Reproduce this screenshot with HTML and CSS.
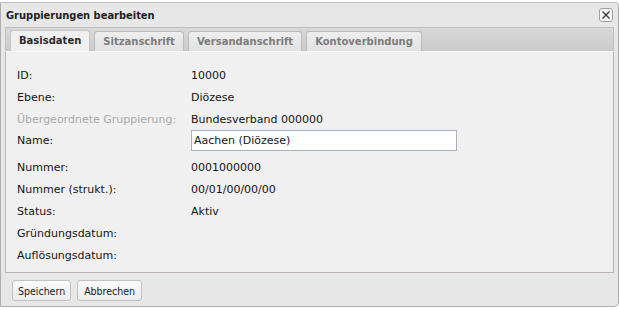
FILE: index.html
```html
<!DOCTYPE html>
<html lang="de">
<head>
<meta charset="utf-8">
<title>Gruppierungen bearbeiten</title>
<link rel="stylesheet" href="styles.css">
</head>
<body>
<div class="window">
  <div class="titlebar">
    <span class="title">Gruppierungen bearbeiten</span>
    <span class="close" aria-label="Schließen">
      <svg width="10" height="10" viewBox="0 0 10 10"><path d="M1.5 1.5L8.5 8.5M8.5 1.5L1.5 8.5" stroke="#3a3a3a" stroke-width="1.3" fill="none"/></svg>
    </span>
  </div>
  <div class="tabstrip">
    <span class="tab active">Basisdaten</span>
    <span class="tab">Sitzanschrift</span>
    <span class="tab">Versandanschrift</span>
    <span class="tab">Kontoverbindung</span>
  </div>
  <div class="panel">
    <div class="form">
      <div class="label">ID:</div><div class="value">10000</div>
      <div class="label">Ebene:</div><div class="value">Diözese</div>
      <div class="label disabled">Übergeordnete Gruppierung:</div><div class="value">Bundesverband 000000</div>
      <div class="label tall">Name:</div><div class="value tall"><input class="input" type="text" value="Aachen (Diözese)"></div>
      <div class="label">Nummer:</div><div class="value">0001000000</div>
      <div class="label">Nummer (strukt.):</div><div class="value">00/01/00/00/00</div>
      <div class="label">Status:</div><div class="value">Aktiv</div>
      <div class="label">Gründungsdatum:</div><div class="value"></div>
      <div class="label">Auflösungsdatum:</div><div class="value"></div>
    </div>
  </div>
  <div class="footer">
    <button class="btn" type="button">Speichern</button>
    <button class="btn wide" type="button">Abbrechen</button>
  </div>
</div>
</body>
</html>
```

FILE: styles.css
```css
html, body {
  margin: 0;
  padding: 0;
  background: #ffffff;
}
body {
  font-family: "DejaVu Sans", sans-serif;
  font-size: 11px;
  color: #000;
}
.window {
  box-sizing: border-box;
  width: 619px;
  height: 305px;
  margin-top: 2px;
  background: #e7e7e7;
  border: 1px solid #b0acac;
  border-top-color: #c4c0c0;
  border-radius: 0 4px 5px 0;
  display: flex;
  flex-direction: column;
  padding: 0 4px;
}
.titlebar {
  height: 24px;
  flex: none;
  display: flex;
  align-items: center;
  justify-content: space-between;
  padding: 0 1px 0 1px;
}
.title {
  font-family: "DejaVu Sans Condensed", "DejaVu Sans", sans-serif;
  font-weight: bold;
  color: #1e1e1e;
  font-size: 11px;
}
.close {
  width: 14px;
  height: 14px;
  box-sizing: border-box;
  border: 1px solid #a0a0a0;
  border-radius: 3px;
  background: #f7f7f7;
  display: flex;
  align-items: center;
  justify-content: center;
}
.tabstrip {
  height: 24px;
  flex: none;
  display: flex;
  align-items: flex-end;
  gap: 4px;
  padding-left: 4px;
  background: linear-gradient(#d9d9d9, #cbcbcb);
  border: 1px solid #c2bebe;
  border-bottom: 1px solid #c8c8c8;
  box-sizing: border-box;
}
.tab {
  font-weight: bold;
  font-size: 10px;
  color: #7c7c7c;
  height: 20px;
  line-height: 19px;
  box-sizing: border-box;
  padding: 0 8px;
  border: 1px solid #bdb9b9;
  border-bottom: none;
  border-radius: 3px 3px 0 0;
  background: linear-gradient(#eeeeee, #e1e1e1);
  margin-bottom: -1px;
}
.tab.active {
  color: #2a2a2a;
  background: #f0f0f0;
  height: 21px;
  border-color: #c8c4c4;
}
.panel {
  height: 222px;
  flex: none;
  box-sizing: border-box;
  background: #f0f0f0;
  border: 1px solid #bab2b2;
  border-top: 1px solid #f8f8f8;
  padding: 12px 11px 0;
}
.form {
  display: grid;
  grid-template-columns: 174px 1fr;
  grid-template-rows: 22px 22px 22px 26px 22px 22px 22px 22px 22px;
  align-items: center;
}
.label, .value {
  color: #141414;
}
.label.disabled {
  color: #a9a9a9;
}
.tall {
  align-self: start;
  line-height: 21px;
}
.input {
  display: block;
  box-sizing: border-box;
  width: 266px;
  height: 21px;
  border: 1px solid #a8b0bc;
  background: #fff;
  font: inherit;
  color: #141414;
  padding: 0 2px;
  margin: 0;
}
.footer {
  display: flex;
  gap: 6px;
  padding: 7px 0 0 7px;
}
.btn {
  font-family: "DejaVu Sans Condensed", "DejaVu Sans", sans-serif;
  font-size: 10.5px;
  color: #1a1a1a;
  height: 21px;
  padding: 0 5px;
  border: 1px solid #c4c0c0;
  border-radius: 3px;
  background: linear-gradient(#fafafa, #ececec);
}
.btn.wide {
  padding: 0 6px;
}
```
